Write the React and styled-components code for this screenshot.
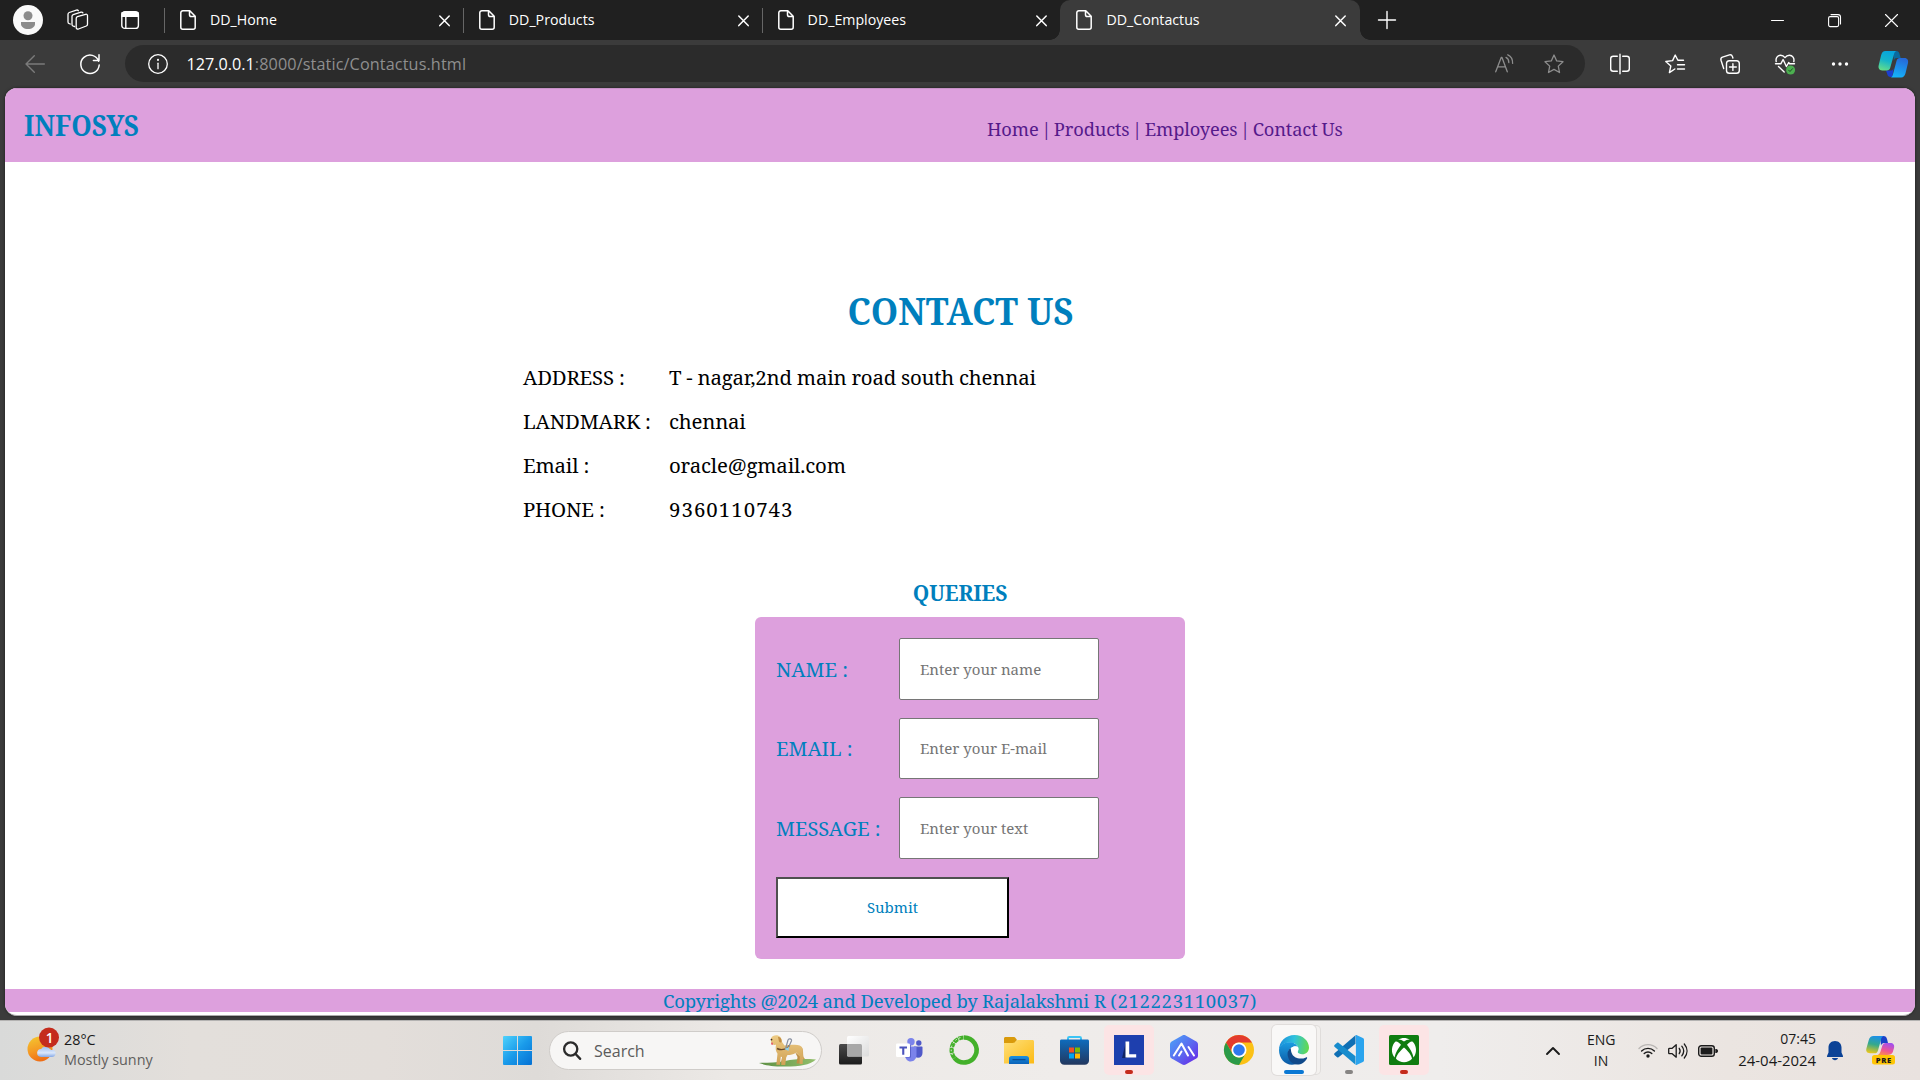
import React from 'react';
import styled, { createGlobalStyle } from 'styled-components';

const Global = createGlobalStyle`
  *, *::before, *::after { box-sizing: border-box; }
  body { margin: 0; background: #3b3b3b; overflow: hidden; }
  svg { display: block; flex: none; overflow: visible; }
`;

const UI = '"Open Sans", "Noto Sans", sans-serif';
const SERIF = '"Noto Serif", "Liberation Serif", serif';
const BLUE = '#007fbd';
const PLUM = '#dda0dd';

const Screen = styled.div`
  width: 1920px;
  height: 1080px;
  display: flex;
  flex-direction: column;
  background: #3b3b3b;
  font-family: ${UI};
`;

/* ---------- browser chrome ---------- */

const TabStrip = styled.div`
  height: 40px;
  flex: none;
  display: flex;
  align-items: center;
  padding-left: 13px;
  background: #202020;
  color: #fff;
`;

const StripTools = styled.div`
  width: 151px;
  display: flex;
  align-items: center;
`;

const Avatar = styled.div`
  width: 30px;
  height: 30px;
  margin-right: 24px;
`;

const StripIcon = styled.div`
  margin-right: ${p => p.$gap || 0}px;
`;

const Tab = styled.div`
  position: relative;
  width: ${p => (p.$active ? 300 : 298.8)}px;
  height: 40px;
  display: flex;
  align-items: center;
  padding: 0 ${p => (p.$active ? 14 : 13)}px 0 16px;
  background: ${p => (p.$active ? '#3b3b3b' : 'transparent')};
  border-radius: ${p => (p.$active ? '10px 10px 0 0' : '0')};

  &::before {
    content: '';
    position: absolute;
    left: ${p => (p.$active ? '-10px' : '0')};
    bottom: ${p => (p.$active ? '0' : '7px')};
    width: ${p => (p.$active ? '10px' : '1px')};
    height: ${p => (p.$active ? '10px' : '25px')};
    background: ${p => (p.$active ? 'radial-gradient(circle at 0 0, transparent 9.5px, #3b3b3b 10px)' : '#666')};
  }
  &::after {
    content: '';
    display: ${p => (p.$active ? 'block' : 'none')};
    position: absolute;
    right: -10px;
    bottom: 0;
    width: 10px;
    height: 10px;
    background: radial-gradient(circle at 100% 0, transparent 9.5px, #3b3b3b 10px);
  }
`;

const TabTitle = styled.span`
  flex: 1;
  margin-left: 14px;
  font-size: 14.2px;
  line-height: 40px;
  height: 40px;
`;

const NewTab = styled.div`
  margin-left: 18px;
  flex: 1;
`;

const WindowButtons = styled.div`
  display: flex;
  align-items: center;
  gap: 44px;
  padding-right: 22.5px;
`;

const Toolbar = styled.div`
  height: 48px;
  flex: none;
  display: flex;
  align-items: flex-start;
  padding-top: 5px;
  color: #fff;
`;

const NavButtons = styled.div`
  width: 125px;
  height: 37px;
  display: flex;
  align-items: center;
  gap: 35px;
  padding-left: 25px;
`;

const AddressBar = styled.div`
  width: 1460px;
  height: 37px;
  border-radius: 19px;
  background: #2b2b2b;
  display: flex;
  align-items: center;
  padding: 0 21px 0 22.5px;
`;

const Url = styled.div`
  flex: 1;
  margin-left: 19px;
  font-size: 16.2px;
  line-height: 38px;
  height: 37px;
  color: #8f8f8f;
`;

const UrlHost = styled.span`
  color: #fff;
`;

const UrlPath = styled.span`
  letter-spacing: 0.12px;
`;

const AddressIcons = styled.div`
  display: flex;
  align-items: center;
  gap: 30px;
  color: #8d8d8d;
`;

const ToolbarActions = styled.div`
  height: 37px;
  display: flex;
  align-items: center;
  gap: 35px;
  padding-left: 24.5px;
`;

const CopilotSlot = styled.div`
  margin: 1px 0 0 -7px;
`;

/* ---------- web page ---------- */

const Page = styled.main`
  margin: 0 5px 4px;
  height: 928px;
  flex: none;
  background: #fff;
  border-radius: 12px;
  border-bottom: 1px solid #aaa;
  box-shadow: 0 0 3px rgba(0, 0, 0, 0.55);
  overflow: hidden;
  display: flex;
  flex-direction: column;
  font-family: ${SERIF};
  color: #000;
`;

const SiteHeader = styled.header`
  height: 74px;
  flex: none;
  display: flex;
  align-items: baseline;
  padding: 19px 0 0 19px;
  background: ${PLUM};
  box-shadow: inset 0 1px 0 #c892c8;
`;

const Brand = styled.div`
  width: 963px;
  font-size: 28px;
  font-weight: 700;
  line-height: 37px;
  color: ${BLUE};
`;

const Narrow = styled.span`
  display: inline-block;
  transform: scaleX(0.93);
  transform-origin: ${p => p.$origin || 'center'};
`;

const SiteNav = styled.nav`
  font-size: 18.3px;
  letter-spacing: -0.14px;
  word-spacing: -2px;
  white-space: pre;
  color: #551a8b;
`;

const NavLink = styled.a`
  word-spacing: -0.5px;
  color: #551a8b;
  text-decoration: none;
`;

const PageTitle = styled.h1`
  margin: 124px 0 0;
  font-size: 37.5px;
  line-height: 50px;
  text-align: center;
  color: ${BLUE};
`;

const Details = styled.dl`
  margin: 19px 0 0 518px;
  display: grid;
  grid-template-columns: 146px auto;
  grid-auto-rows: 44px;
  font-size: 20.4px;
  line-height: 44px;
  letter-spacing: -0.2px;
`;

const Term = styled.dt`
  letter-spacing: -0.2px;
`;

const Value = styled.dd`
  margin: 0;
  letter-spacing: ${p => p.$spacing ?? -0.22}px;
`;

const FormTitle = styled.h2`
  margin: 46px 0 10px;
  font-size: 21px;
  line-height: 32px;
  height: 30px;
  letter-spacing: -0.1px;
  text-align: center;
  color: ${BLUE};
`;

const QueryForm = styled.form`
  width: 430px;
  height: 342px;
  flex: none;
  margin-left: 750px;
  padding: 21px;
  border-radius: 6px;
  background: ${PLUM};
  display: flex;
  flex-direction: column;
  gap: 18px;
`;

const Field = styled.label`
  height: 61.5px;
  display: grid;
  grid-template-columns: 123px 200px;
  align-items: center;
  font-size: 20.2px;
  line-height: 28px;
  letter-spacing: -0.05px;
  color: ${BLUE};
`;

const Input = styled.input`
  width: 200px;
  height: 61.5px;
  padding: 0 20px;
  border: 1px solid #767676;
  border-radius: 2px;
  background: #fff;
  font-family: ${SERIF};
  font-size: 15px;
  outline: none;
  &::placeholder { color: #757575; opacity: 1; }
`;

const Submit = styled.button`
  width: 233px;
  height: 61.5px;
  padding: 0;
  border: 2px solid;
  border-color: #4f4f4f #000 #000 #4f4f4f;
  background: #fff;
  color: ${BLUE};
  font-family: ${SERIF};
  font-size: 15px;
`;

const SiteFooter = styled.footer`
  margin-top: 30px;
  height: 23px;
  flex: none;
  background: ${PLUM};
  color: ${BLUE};
  font-size: 18.5px;
  line-height: 23px;
  letter-spacing: -0.18px;
  text-align: center;
`;

const RollNumber = styled.span`
  letter-spacing: 0.7px;
`;

/* ---------- taskbar ---------- */

const Taskbar = styled.div`
  height: 60px;
  flex: none;
  display: flex;
  border-top: 1px solid #b4b3b2;
  background: linear-gradient(90deg, #d9dad9 0, #e3dfdb 10%, #e3deda 20%, #dedbd8 28%, #ece9e6 38%, #efecea 55%, #efedec 75%, #ebe5e1 90%, #e9e2df 100%);
`;

const Weather = styled.div`
  width: 492px;
  display: flex;
  padding: 5px 0 0 27px;
`;

const WeatherText = styled.div`
  margin-left: 5px;
  padding-top: 3.5px;
  font-size: 14.4px;
  line-height: 20.5px;
  color: #1b1b1b;
`;

const Muted = styled.div`
  color: #5f5e5d;
`;

const Apps = styled.div`
  display: flex;
  gap: 5px;
  padding-top: 4px;
`;

const AppSlot = styled.div`
  position: relative;
  width: 50px;
  height: 50px;
  display: flex;
  align-items: center;
  justify-content: center;
  border-radius: 5px;
  background: ${p => (p.$alert ? '#fce4e5' : p.$active ? '#f9f8f7' : 'transparent')};
  ${p => p.$active && `
    width: 44px; margin: 0 3px;
    box-shadow: 0 0 0 1px #e0dddb, 5px 0 0 -1px #f3f1ef, 5px 0 0 0 #e0dddb;
  `}

  &::after {
    content: '';
    display: ${p => (p.$mark ? 'block' : 'none')};
    position: absolute;
    left: 50%;
    bottom: 1px;
    width: ${p => (p.$active ? 20 : 8)}px;
    height: 4px;
    border-radius: 2px;
    transform: translateX(-50%);
    background: ${p => p.$mark};
  }
`;

const SearchBox = styled.div`
  width: 273px;
  height: 39px;
  margin: 6px 2px 0 2px;
  display: flex;
  align-items: center;
  padding: 0 5px 0 13px;
  border: 1px solid #cfccc9;
  border-radius: 20px;
  background: #f7f6f5;
`;

const SearchLabel = styled.span`
  flex: 1;
  margin-left: 13px;
  font-size: 16px;
  line-height: 38px;
  color: #5b5b5b;
`;

const Tray = styled.div`
  flex: 1;
  display: flex;
  justify-content: flex-end;
  align-items: center;
  padding: 0 24px 0 0;
  font-size: 14px;
  line-height: 20.5px;
  color: #1b1b1b;
`;

const Language = styled.div`
  width: 28px;
  margin: 0 23px 0 27px;
  text-align: center;
`;

const Status = styled.div`
  display: flex;
  align-items: center;
  gap: 10px;
`;

const Clock = styled.div`
  width: 98px;
  margin-bottom: 2px;
  text-align: right;
`;

const DateText = styled.div`
  font-size: 14.9px;
`;

const Bell = styled.div`
  margin: 0 23px 0 11px;
`;

/* ---------- icons ---------- */

const Line = ({ w, h, children, sw = 1.4, color = 'currentColor' }) => (
  <svg width={w} height={h} viewBox={`0 0 ${w} ${h}`} fill="none" stroke={color} strokeWidth={sw} strokeLinecap="round" strokeLinejoin="round">
    {children}
  </svg>
);

const ProfileIcon = () => (
  <svg width="30" height="30" viewBox="0 0 30 30">
    <circle cx="15" cy="15" r="15" fill="#fafafa" />
    <circle cx="15" cy="10.8" r="4.5" fill="#8c8c8c" />
    <path d="M8 17h14v1.700c0 3.200-3 5.300-7 5.300s-7-2.100-7-5.300z" fill="#8c8c8c" />
  </svg>
);

const WorkspacesIcon = () => (
  <Line w={22} h={22} sw={1.3}>
    <path d="M9.2 9.4c0-.8.5-1.4 1.2-1.7l8.2-2.4c1-.3 1.9.3 1.9 1.3v8.6c0 .8-.4 1.4-1.2 1.8l-7.8 3c-1.100.4-2.300-.2-2.300-1.300z" />
    <path d="M7.600 17.500l-1.200-.3c-.9-.3-1.400-.9-1.400-1.800V7.300c0-.8.4-1.400 1.200-1.700L14 3.200c.8-.2 1.500 0 1.900.7" />
    <path d="M3.300 15l-1-.3c-.9-.3-1.300-.9-1.300-1.800V5.200c0-.8.4-1.400 1.200-1.700L9.400 1.100c.8-.2 1.500 0 1.900.6" />
  </Line>
);

const TabMenuIcon = () => (
  <Line w={18} h={18} sw={1.4}>
    <rect x="0.8" y="0.8" width="16.600" height="16.600" rx="3" />
    <path d="M1 1.800h16v3.600H1z" fill="currentColor" />
    <path d="M4.800 6v11" />
  </Line>
);

const FileIcon = () => (
  <Line w={16} h={20} sw={1.5}>
    <path d="M9.800.8H2.800a2 2 0 0 0-2 2v14.400a2 2 0 0 0 2 2h10.400a2 2 0 0 0 2-2V6.200zM9.500 1v3.700a1.800 1.800 0 0 0 1.800 1.800H15" />
  </Line>
);

const CloseTab = () => <Line w={11} h={11} sw={1.5}><path d="M.8 1l9.400 9.600M10.200 1L.8 10.600" /></Line>;
const Plus = () => <Line w={18} h={18} sw={1.4}><path d="M9 .5v17M.5 9h17" /></Line>;
const Minimize = () => <Line w={13} h={13} sw={1}><path d="M.5 6.500h12" /></Line>;
const Restore = () => (
  <Line w={13} h={13} sw={1.1}>
    <rect x=".6" y="2.600" width="10" height="10" rx="1.500" />
    <path d="M3 .6h7a2.500 2.500 0 0 1 2.500 2.500V10" />
  </Line>
);
const CloseWindow = () => <Line w={13} h={13} sw={1.1}><path d="M.5.5l12 12M12.500.5l-12 12" /></Line>;

const BackIcon = () => <Line w={20} h={18} sw={1.4} color="#7b7b7b"><path d="M19.300 9H1M9.300.8L1 9l8.300 8.200" /></Line>;
const ReloadIcon = () => (
  <Line w={20} h={20} sw={1.5}>
    <path d="M18.700 7.200A9.200 9.200 0 1 0 19.200 11M19 .8v5.600h-5.600" />
  </Line>
);
const InfoIcon = () => (
  <Line w={20} h={20} sw={1.300}>
    <circle cx="10" cy="10" r="9.300" />
    <path d="M10 9.200v5.500" />
    <circle cx="10" cy="5.900" r=".4" fill="currentColor" />
  </Line>
);
const ReadAloudIcon = () => (
  <Line w={19} h={20} sw={1.300}>
    <path d="M.7 17.800L6.200 3.500h.8l5.300 14.300M2.600 12.800h7.900M11 3.400c1.900 1 2.900 2.800 2.800 5.200M12.800.8c3.300 1.500 5 4.500 4.800 8.600" />
  </Line>
);
const StarPath = 'M10 1l2.700 5.900 6.300.8-4.700 4.400 1.200 6.400L10 15.400l-5.500 3.100 1.200-6.400L1 7.700l6.300-.8z';
const StarIcon = () => <Line w={20} h={20} sw={1.300}><path d={StarPath} /></Line>;
const SplitIcon = () => (
  <Line w={20} h={20} sw={1.400}>
    <path d="M10 .3v19.400M7.300 2.300H3.200a2.500 2.500 0 0 0-2.500 2.500v9.900a2.500 2.500 0 0 0 2.500 2.500h4.100M12.700 2.300h4.100a2.500 2.500 0 0 1 2.500 2.500v9.900a2.500 2.500 0 0 1-2.500 2.500h-4.100" />
  </Line>
);
const FavoritesIcon = () => (
  <Line w={20} h={20} sw={1.400}>
    <path d="M18.500 6.300h-5.600L10.200 1 7.600 6.600l-6.800.9 5 4.500-1.400 6.600L9.800 15M12.500 10.700h7M12.500 15h7" />
  </Line>
);
const CollectionsIcon = () => (
  <Line w={20} h={20} sw={1.400}>
    <rect x="6.500" y="6.800" width="12.800" height="12.500" rx="2.800" />
    <path d="M12.900 9.700v6.700M9.500 13h6.800M3.700 14.500L1 6.200C.6 4.800 1.100 3.600 2.500 3.100l6.900-2.200c1.400-.4 2.500.2 3 1.500l.5 1.600" />
  </Line>
);
const HealthIcon = () => (
  <Line w={20} h={20} sw={1.400}>
    <path d="M1.200 7.500C.4 4 2.500 1.200 5.600 1.200c1.900 0 3.300.9 4.400 2.400 1.100-1.500 2.500-2.400 4.400-2.400 3.100 0 5.200 2.800 4.400 6.300M.5 9.800h5.300l2.300-4.300 3.300 7 2.300-4 .9 1.300h4.900M3.500 12.500l5.700 5.500" />
    <circle cx="15.600" cy="16" r="4.500" fill="#4caf50" stroke="none" />
    <path d="M13.700 16.200l1.300 1.300 2.500-2.800" stroke="#1f4d22" strokeWidth="1" />
  </Line>
);
const MoreIcon = () => (
  <svg width="20" height="20" viewBox="0 0 20 20" fill="currentColor">
    <circle cx="3.500" cy="10" r="1.700" /><circle cx="10" cy="10" r="1.700" /><circle cx="16.500" cy="10" r="1.700" />
  </svg>
);

const CopilotIcon = () => (
  <svg width="31" height="27" viewBox="0 0 31 27">
    <defs>
      <linearGradient id="cpA" x1=".6" y1="0" x2=".3" y2="1"><stop offset="0" stopColor="#06a4dd" /><stop offset=".5" stopColor="#16b5c9" /><stop offset="1" stopColor="#63dd8b" /></linearGradient>
      <linearGradient id="cpB" x1=".6" y1="0" x2=".3" y2="1"><stop offset="0" stopColor="#2669d8" /><stop offset="1" stopColor="#14b5fb" /></linearGradient>
    </defs>
    <path d="M15 0h3.500c1.600 0 2.400 1 2.900 2.600L22.700 7h-3.500c-2 0-2.800.8-3.300 2.500z" fill="#0a6a9e" />
    <path d="M8 19.500h4.500c1.500 0 2.600-.6 3.200-2.600L14.300 26h-1.700c-2 0-2.800-1-3.300-2.700z" fill="#1b3fd0" />
    <path d="M7.500 0h10.800c-1.300.4-1.900 1.700-2.300 3.200l-3.700 13.300c-.6 2.200-1.700 3-3.600 3H4.200C1.200 19.500 0 17 .7 14.300L3.100 4.200C3.800 1.500 5.100 0 7.500 0z" fill="url(#cpA)" />
    <path d="M23.200 26.500H12.500c1.400-.4 2-1.600 2.400-3.100L18.500 10c.6-2.200 1.700-3 3.600-3h4.300c3.100 0 4.200 2.500 3.600 5.100l-2.500 10.200c-.7 2.700-2 4.200-4.300 4.200z" fill="url(#cpB)" />
  </svg>
);

const WeatherIcon = () => (
  <svg width="32" height="40" viewBox="0 0 32 40">
    <defs>
      <linearGradient id="sun" x1=".3" y1="0" x2=".6" y2="1"><stop offset="0" stopColor="#f3c32f" /><stop offset=".5" stopColor="#f59b24" /><stop offset="1" stopColor="#ee6a14" /></linearGradient>
      <linearGradient id="cloud" x1="0" y1="0" x2="0" y2="1"><stop offset="0" stopColor="#9dbdf0" /><stop offset=".6" stopColor="#dbe8fb" /><stop offset="1" stopColor="#86a9e6" /></linearGradient>
    </defs>
    <circle cx="13" cy="23" r="12.500" fill="url(#sun)" />
    <path d="M14 31a4 4 0 0 1 .3-8c1.200-3 6.800-3.300 8.400 0 .4 0 1.200.5 1.500 1 3.400-.5 5 2 4.300 4-.4 2-1.600 3-3.500 3z" fill="url(#cloud)" />
    <circle cx="22" cy="11.500" r="10" fill="#c42b1c" />
    <text x="22.500" y="16.500" fontSize="13.500" textAnchor="middle" fill="#fff" fontFamily="Open Sans, sans-serif" fontWeight="600">1</text>
  </svg>
);

const StartIcon = () => (
  <svg width="29" height="29" viewBox="0 0 29 29">
    <defs><linearGradient id="win" x1="0" y1="0" x2="1" y2="1"><stop offset="0" stopColor="#4fd2fc" /><stop offset=".5" stopColor="#1a9bea" /><stop offset="1" stopColor="#0570d3" /></linearGradient></defs>
    <path d="M1 0h13v14H0V1a1 1 0 0 1 1-1zM15 0h13a1 1 0 0 1 1 1v13H15zM0 15h14v14H1a1 1 0 0 1-1-1zM15 15h14v13a1 1 0 0 1-1 1H15z" fill="url(#win)" />
  </svg>
);

const SearchIcon = () => (
  <Line w={18} h={19} sw={2.300} color="#2b2b2b"><circle cx="7.700" cy="8" r="6.600" /><path d="M12.600 13l4.600 4.900" /></Line>
);

const DogIcon = () => (
  <svg width="57" height="32" viewBox="0 0 57 32">
    <defs>
      <linearGradient id="hill" x1="0" y1="0" x2="1" y2="0"><stop offset="0" stopColor="#5d8f43" /><stop offset="1" stopColor="#93bf6c" /></linearGradient>
      <linearGradient id="fur" x1="0" y1="0" x2="0" y2="1"><stop offset="0" stopColor="#edcb85" /><stop offset="1" stopColor="#d0a155" /></linearGradient>
    </defs>
    <path d="M0 28c8 2.500 12 3.500 26 3.500C42 31.500 50 30 57 24.500 44 23.500 36 24 26 26c-10 2-18 1.500-26 2z" fill="url(#hill)" />
    <path d="M24 17l-2 11h3.500l2-10zM36 17l2.500 5-1 6.500h3l.8-7z" fill="#bf8f45" />
    <path d="M42.500 12c2.500 3 1 7 2.300 10.500l1.200 1.500-1.500.5c-2.500-2-3-5-2.800-8z" fill="#cf9f52" />
    <path d="M12 3.500C13 .8 16.500-.3 19.500.7c2.500.8 3.200 3.300 3.200 5.800l2.800 4c4-1.200 9-.9 13-.6 3.400.2 5 2 5.200 4.600.2 2.500-.2 4.500.3 6.500l-.3 8h-3.200l.3-7.500-3.600-4c-2.400 2-6 2.600-8.700 2.600l-1.300 2.500-1 7.400h-4l1-8-1.400-.2-.8 8h-3.700l1.200-11c-1.800-2.500-2.200-5.500-1.500-9-2.400.3-4-.2-4.800-1.600z" fill="url(#fur)" />
    <path d="M19 2c2.200 0 4 1.500 3.600 5-1 1-2.100.5-2.600-.5z" fill="#c18f45" />
    <path d="M12.500 7.500l1.500.3-.5 2.200c-1 .4-1.800-1-1-2.500z" fill="#e2506a" />
    <circle cx="12.500" cy="4.600" r=".9" fill="#3b2b20" />
    <path d="M18 13.500c3 1.500 7 1.500 11-1l1-2" fill="none" stroke="#6a4a2c" strokeWidth="1.400" />
    <path d="M26.500 14l2.500-9c.5-2 4.200-1.300 3.500.8L29 13.500" fill="none" stroke="#8890a0" strokeWidth="1.200" />
    <path d="M25.500 14l4.500-2-.5 4z" fill="#8fd3ee" />
  </svg>
);

const TaskViewIcon = () => (
  <svg width="30" height="29" viewBox="0 0 30 29">
    <defs>
      <linearGradient id="tvA" x1="0" y1="0" x2="0" y2="1"><stop offset="0" stopColor="#4a4a4a" /><stop offset="1" stopColor="#1c1c1c" /></linearGradient>
      <linearGradient id="tvB" x1="0" y1="0" x2="1" y2="1"><stop offset="0" stopColor="#fff" /><stop offset="1" stopColor="#dcdcdc" /></linearGradient>
    </defs>
    <rect x="0" y="8" width="23" height="20.500" rx="1.500" fill="url(#tvA)" />
    <rect x="8" y="0" width="22" height="20.500" rx="1.500" fill="url(#tvB)" />
    <path d="M8 8h13.500a1.500 1.500 0 0 1 1.500 1.500v11H9.500A1.500 1.500 0 0 1 8 19z" fill="#a8a8a8" />
  </svg>
);

const TeamsIcon = () => (
  <svg width="27" height="24" viewBox="0 0 27 24">
    <circle cx="22.800" cy="5" r="2.700" fill="#5059c9" />
    <path d="M18 8.500h7.500c.6 0 1 .4 1 1V15c0 3-2 4.700-4.500 4.700-2 0-3.500-1-4-2.500z" fill="#5059c9" />
    <circle cx="15" cy="3.700" r="3.700" fill="#7b83eb" />
    <path d="M9.500 8.500h10c.6 0 1 .4 1 1v7.300c0 4-2.500 6.700-5.800 6.700S9.200 21 9 17z" fill="#7b83eb" />
    <path d="M10 7h5v12.500h-5.500z" fill="#4b53bc" opacity=".7" />
    <rect x="0" y="5.500" width="14" height="13.500" rx="1.300" fill="#fff" />
    <path d="M3.500 8.500h7.500v2H8.300v6.300H6.200v-6.300H3.500z" fill="#4b53bc" />
  </svg>
);

const AnacondaIcon = () => (
  <svg width="30" height="30" viewBox="0 0 30 30" fill="none" stroke="#43b02a">
    <path d="M15 2.500a12.500 12.500 0 1 1-9.500 20.500" strokeWidth="4.600" />
    <path d="M5.500 23A12.500 12.500 0 0 1 15 2.500" strokeWidth="4.200" strokeDasharray="5 .6" />
    <path d="M3.400 20A12.500 12.500 0 0 1 12 2.500" stroke="#f0edeb" strokeWidth="1" strokeDasharray="1.500 2.500" />
    <path d="M5.400 18A10 10 0 0 1 13 4.500" stroke="#f0edeb" strokeWidth=".8" strokeDasharray="1.500 3" />
  </svg>
);

const ExplorerIcon = () => (
  <svg width="30" height="27" viewBox="0 0 30 27">
    <defs>
      <linearGradient id="fold" x1="0" y1="0" x2="1" y2="1"><stop offset="0" stopColor="#ffe07a" /><stop offset="1" stopColor="#fcba14" /></linearGradient>
      <linearGradient id="dock" x1="0" y1="0" x2="0" y2="1"><stop offset="0" stopColor="#1b91e0" /><stop offset="1" stopColor="#0b62b8" /></linearGradient>
    </defs>
    <path d="M0 1.500C0 .6.600 0 1.500 0h8c1 0 1.500.3 2 1l1.500 2-3 4H0z" fill="#d99a0b" />
    <path d="M0 6h9c1 0 1.500-.3 2-.9l1.300-1.400c.5-.5 1-.7 1.700-.7h14.500c.9 0 1.500.6 1.500 1.500V26.500H0z" fill="url(#fold)" />
    <path d="M5 27v-5.500c0-1.500 1-2.500 2.500-2.500h15c1.500 0 2.500 1 2.500 2.500V27z" fill="url(#dock)" />
    <rect x="8.500" y="22" width="13" height="1.300" fill="#0b4d94" />
  </svg>
);

const StoreIcon = () => (
  <svg width="29" height="30" viewBox="0 0 29 30">
    <defs><linearGradient id="bag" x1="0" y1="0" x2="0" y2="1"><stop offset="0" stopColor="#0f6cbd" /><stop offset="1" stopColor="#22375e" /></linearGradient></defs>
    <path d="M8 6.500V3.300c0-.8.500-1.300 1.300-1.300h10.400c.8 0 1.300.5 1.300 1.300v3.200" fill="none" stroke="#3cc4f5" strokeWidth="2" />
    <path d="M0 6c0-1 .6-1.500 1.500-1.500h26c.9 0 1.500.6 1.500 1.500v19.500c0 2.500-1.800 4.300-4.300 4.300H4.300C1.800 29.800 0 28 0 25.500z" fill="url(#bag)" />
    <rect x="9" y="12.500" width="5" height="5" fill="#f25022" /><rect x="15" y="12.500" width="5" height="5" fill="#7fba00" />
    <rect x="9" y="18.500" width="5" height="5" fill="#00a4ef" /><rect x="15" y="18.500" width="5" height="5" fill="#ffb900" />
  </svg>
);

const LenovoIcon = () => (
  <svg width="30" height="30" viewBox="0 0 30 30">
    <rect width="30" height="30" fill="#1e3fae" />
    <path d="M12 6.500L8 23h5z" fill="#102463" />
    <path d="M11.500 6.500h3.700v12.700h7v3.300H11.500z" fill="#fff" />
  </svg>
);

const HexIcon = () => (
  <svg width="28" height="30" viewBox="0 0 28 30">
    <defs><linearGradient id="hex" x1="0" y1="0" x2="1" y2="1"><stop offset="0" stopColor="#4aa5f7" /><stop offset=".5" stopColor="#5a6cf0" /><stop offset="1" stopColor="#6a1fe6" /></linearGradient></defs>
    <path d="M12.300.4c1-.5 2.400-.5 3.400 0l10.600 6c1 .6 1.700 1.700 1.700 2.900v11.400c0 1.200-.7 2.300-1.700 2.900l-10.600 6c-1 .5-2.400.5-3.400 0l-10.600-6A3.400 3.400 0 0 1 0 20.700V9.300c0-1.200.7-2.300 1.700-2.900z" fill="url(#hex)" />
    <path d="M3.800 20.500L11.500 8.500 18 20.500M9 20.500l2.500-4M18.500 12l5.500 8.500" fill="none" stroke="#fff" strokeWidth="2" strokeLinecap="round" strokeLinejoin="round" />
  </svg>
);

const ChromeIcon = () => (
  <svg width="30" height="30" viewBox="0 0 30 30">
    <circle cx="15" cy="15" r="15" fill="#fbc116" />
    <path d="M2 7.500A15 15 0 0 1 28 7.500H15A7.500 7.500 0 0 0 8.500 18.800z" fill="#e33b2e" />
    <path d="M2 7.500A15 15 0 0 0 15 30l6.500-11.300A7.500 7.500 0 0 1 8.500 18.800z" fill="#2a9a48" />
    <circle cx="15" cy="15" r="7.500" fill="#fff" />
    <circle cx="15" cy="15" r="5.800" fill="#2f78ee" />
  </svg>
);

const EdgeIcon = () => (
  <svg width="30" height="30" viewBox="0 0 30 30">
    <defs>
      <linearGradient id="edA" x1="0" y1=".3" x2="1" y2=".4"><stop offset="0" stopColor="#1c8ddb" /><stop offset=".5" stopColor="#2fc2dd" /><stop offset="1" stopColor="#63d94f" /></linearGradient>
      <linearGradient id="edB" x1="0" y1="0" x2="0" y2="1"><stop offset="0" stopColor="#1b9de2" /><stop offset="1" stopColor="#0c59a4" /></linearGradient>
    </defs>
    <path d="M0 15C0 6.500 6.800 0 15.500 0S30 6.300 30 12.500c0 4.200-3 6.800-6.800 6.800-3.500 0-5-1.500-4.700-2.600.3-.8.900-1.300.9-2.900 0-3.300-3.600-6.300-8.400-6.300C5 7.500 1 11 0 15z" fill="url(#edA)" />
    <path d="M0 15C.5 10.500 5 7.300 10.500 7.300c4 0 7.300 2 8.400 5-4-2-9.400.5-9.700 5.700-.2 5 3 9.500 8 11C8 32 0 25 0 15z" fill="url(#edB)" />
    <path d="M11.500 13c-2 1.500-3.300 4-2.900 7 .5 5 4.500 9.500 9.400 9.600 4 .2 8-2.600 10-6.200.5-1-.2-1.500-1-1-5.500 2.700-12.500.8-14.400-4.400-.6-1.700-.5-3.500-1.100-5z" fill="#114a8b" />
    <path d="M19.200 12.600c.5 1.700.2 3-.5 4-.6 1.100.6 2.500 4 2.700-4 .8-10-.5-10.500-4.300-.2-1.800 1-3 2.800-3.500 1.800-.4 3.500.1 4.200 1.100z" fill="#fff" />
  </svg>
);

const CodeIcon = () => (
  <svg width="30" height="30" viewBox="0 0 30 30">
    <path d="M21.500.3v8.500L4.500 22.300c-.5.400-1 .3-1.400 0L.500 20c-.5-.5-.5-1.200 0-1.700z" fill="#0f6fb4" />
    <path d="M.5 11.700c-.5-.5-.5-1.200 0-1.700l2.600-2.300c.4-.3 1-.3 1.400 0l17 13.500v8.500z" fill="#178ccd" />
    <path d="M21.300.4c.3-.4 1-.5 1.600-.2l6 2.800c.7.3 1.100 1 1.100 1.700v20.600c0 .7-.4 1.400-1.100 1.700l-6 2.800c-.6.3-1.300.2-1.700-.3.300.2.700 0 .7-.5V1c0-.5-.3-.8-.6-.6z" fill="#2aa4ee" />
  </svg>
);

const XboxIcon = () => (
  <svg width="30" height="30" viewBox="0 0 30 30">
    <rect width="30" height="30" rx="1.500" fill="#107c10" />
    <path d="M9 4.600C11 3.500 13 3 15 3s4 .5 6 1.600c-2-.3-4 .6-6 1.900-2-1.300-4-2.200-6-1.900z" fill="#fff" />
    <path d="M6.300 6.700C3 10 2 15.500 4 20c.4.900.9 1.800 1.500 2.500C6.500 18 9 13.500 12 9.800 10 7.500 8 6 6.300 6.700zM23.700 6.700C27 10 28 15.500 26 20c-.4.900-.9 1.800-1.500 2.500C23.500 18 21 13.500 18 9.800c2-2.300 4-3.800 5.700-3.100z" fill="#fff" />
    <path d="M15 12.500c4 3.500 7.500 7.700 8 11.200-2 2.200-5 3.500-8 3.500s-6-1.300-8-3.500c.5-3.500 4-7.700 8-11.200z" fill="#fff" />
  </svg>
);

const ChevronUp = () => <Line w={14} h={8} sw={1.900}><path d="M1 7l6-6 6 6" /></Line>;
const WifiIcon = () => (
  <svg width="20" height="15" viewBox="0 0 20 15" fill="none" stroke="#1b1b1b" strokeWidth="1.400" strokeLinecap="round">
    <path d="M1 5.500a12.500 12.500 0 0 1 18 0" stroke="#b9b6b4" />
    <path d="M3.600 8a9 9 0 0 1 12.800 0M6.200 10.500a5.400 5.400 0 0 1 7.600 0" />
    <circle cx="10" cy="13" r="1.700" fill="#1b1b1b" stroke="none" />
  </svg>
);
const VolumeIcon = () => (
  <Line w={20} h={16} sw={1.300}>
    <path d="M1.500 5.300h2.700L8.200 1.800v12.400L4.200 10.700H1.500c-.5 0-.8-.3-.8-.8V6.100c0-.5.300-.8.8-.8zM11.200 5.300c1.200 1.700 1.200 3.700 0 5.400M13.800 3.200c2.400 3 2.400 6.600 0 9.600M16.300 1c3.600 4.300 3.600 9.700 0 14" />
  </Line>
);
const BatteryIcon = () => (
  <svg width="20" height="12" viewBox="0 0 20 12">
    <rect x=".7" y=".7" width="15.600" height="10.600" rx="2.600" fill="none" stroke="#1b1b1b" strokeWidth="1.400" />
    <rect x="2.600" y="2.600" width="11.800" height="6.800" rx="1" fill="#1b1b1b" />
    <path d="M17.300 4c1.700 0 2.700.6 2.700 2s-1 2-2.700 2z" fill="#1b1b1b" />
  </svg>
);
const BellIcon = () => (
  <svg width="16" height="20" viewBox="0 0 16 20" fill="#0b4296">
    <path d="M8 0c4 0 6.500 2.900 6.500 6.500v5L16 15c.2.500-.1 1-.6 1H.600C.1 16-.2 15.500 0 15l1.500-3.500v-5C1.500 2.900 4 0 8 0zM5 17h6c-.3 1.400-1.500 2.200-3 2.200S5.300 18.400 5 17z" />
  </svg>
);
const CopilotPreIcon = () => (
  <svg width="30" height="29" viewBox="0 0 30 29">
    <defs>
      <linearGradient id="cqA" x1=".6" y1="0" x2=".4" y2="1"><stop offset="0" stopColor="#1b8fea" /><stop offset=".5" stopColor="#35a98c" /><stop offset="1" stopColor="#e5c61e" /></linearGradient>
      <linearGradient id="cqB" x1=".7" y1="0" x2=".3" y2="1"><stop offset="0" stopColor="#a04ff0" /><stop offset=".6" stopColor="#ee5596" /><stop offset="1" stopColor="#fb8a52" /></linearGradient>
    </defs>
    <path d="M14 0h3.500c2 0 3 1 3.500 3l1 4h-4c-1.500 0-2.500 1-3 2.500z" fill="#1b41c9" />
    <path d="M7.500 0h10c-1.300.4-2 1.700-2.400 3.200L12 14.500c-.6 2-1.700 2.800-3.600 2.800H4C1 17.300-.3 15.300.4 12.600L2.800 4C3.500 1.500 5.100 0 7.500 0z" fill="url(#cqA)" />
    <path d="M21 19H11.500c1.500-.5 2.500-2 3-3.500l1.700-5.500c.6-2 1.700-3 3.600-3h4.500c3 0 4.500 2 3.700 5l-1.200 4c-.7 2-2.500 3-5.800 3z" fill="url(#cqB)" />
    <rect x="6" y="19" width="23" height="9.500" rx="2.500" fill="#ffc505" />
    <text x="17.800" y="26.500" fontSize="7.600" fontWeight="800" letterSpacing=".7" textAnchor="middle" fill="#1b1b1b" fontFamily="Open Sans, sans-serif">PRE</text>
  </svg>
);

/* ---------- data ---------- */

const tabs = ['DD_Home', 'DD_Products', 'DD_Employees', 'DD_Contactus'];
const links = ['Home', 'Products', 'Employees', 'Contact Us'];
const details = [
  { term: 'ADDRESS :', value: 'T - nagar,2nd main road south chennai' },
  { term: 'LANDMARK :', value: 'chennai' },
  { term: 'Email :', value: 'oracle@gmail.com', spacing: -0.15 },
  { term: 'PHONE :', value: '9360110743', spacing: 1.05 },
];
const fields = [
  { label: 'NAME :', hint: 'Enter your name' },
  { label: 'EMAIL :', hint: 'Enter your E-mail' },
  { label: 'MESSAGE :', hint: 'Enter your text' },
];
const pinned = [
  { Icon: TaskViewIcon },
  { Icon: TeamsIcon },
  { Icon: AnacondaIcon },
  { Icon: ExplorerIcon },
  { Icon: StoreIcon },
  { Icon: LenovoIcon, alert: true, mark: '#c42b1c' },
  { Icon: HexIcon },
  { Icon: ChromeIcon },
  { Icon: EdgeIcon, active: true, mark: '#0a78d4' },
  { Icon: CodeIcon, mark: '#868483' },
  { Icon: XboxIcon, alert: true, mark: '#c42b1c' },
];

export default function App() {
  return (
    <Screen>
      <Global />
      <TabStrip>
        <StripTools>
          <Avatar><ProfileIcon /></Avatar>
          <StripIcon $gap={32}><WorkspacesIcon /></StripIcon>
          <StripIcon><TabMenuIcon /></StripIcon>
        </StripTools>
        {tabs.map((title, i) => (
          <Tab key={title} $active={i === 3}>
            <FileIcon />
            <TabTitle>{title}</TabTitle>
            <CloseTab />
          </Tab>
        ))}
        <NewTab><Plus /></NewTab>
        <WindowButtons><Minimize /><Restore /><CloseWindow /></WindowButtons>
      </TabStrip>

      <Toolbar>
        <NavButtons><BackIcon /><ReloadIcon /></NavButtons>
        <AddressBar>
          <InfoIcon />
          <Url><UrlHost>127.0.0.1</UrlHost><UrlPath>:8000/static/Contactus.html</UrlPath></Url>
          <AddressIcons><ReadAloudIcon /><StarIcon /></AddressIcons>
        </AddressBar>
        <ToolbarActions>
          <SplitIcon /><FavoritesIcon /><CollectionsIcon /><HealthIcon /><MoreIcon />
          <CopilotSlot><CopilotIcon /></CopilotSlot>
        </ToolbarActions>
      </Toolbar>

      <Page>
        <SiteHeader>
          <Brand><Narrow $origin="left">INFOSYS</Narrow></Brand>
          <SiteNav>
            {links.map((link, i) => (
              <React.Fragment key={link}>{i > 0 && ' | '}<NavLink>{link}</NavLink></React.Fragment>
            ))}
          </SiteNav>
        </SiteHeader>
        <PageTitle><Narrow>CONTACT US</Narrow></PageTitle>
        <Details>
          {details.map(d => (
            <React.Fragment key={d.term}>
              <Term>{d.term}</Term>
              <Value $spacing={d.spacing}>{d.value}</Value>
            </React.Fragment>
          ))}
        </Details>
        <FormTitle>QUERIES</FormTitle>
        <QueryForm>
          {fields.map(f => (
            <Field key={f.label}>{f.label}<Input placeholder={f.hint} /></Field>
          ))}
          <Submit type="button">Submit</Submit>
        </QueryForm>
        <SiteFooter>
          Copyrights @2024 and Developed by Rajalakshmi R <RollNumber>(212223110037)</RollNumber>
        </SiteFooter>
      </Page>

      <Taskbar>
        <Weather>
          <WeatherIcon />
          <WeatherText>28°C<Muted>Mostly sunny</Muted></WeatherText>
        </Weather>
        <Apps>
          <AppSlot><StartIcon /></AppSlot>
          <SearchBox><SearchIcon /><SearchLabel>Search</SearchLabel><DogIcon /></SearchBox>
          {pinned.map(({ Icon, alert, active, mark }, i) => (
            <AppSlot key={i} $alert={alert} $active={active} $mark={mark}><Icon /></AppSlot>
          ))}
        </Apps>
        <Tray>
          <ChevronUp />
          <Language>ENG<br />IN</Language>
          <Status><WifiIcon /><VolumeIcon /><BatteryIcon /></Status>
          <Clock>07:45<DateText>24-04-2024</DateText></Clock>
          <Bell><BellIcon /></Bell>
          <CopilotPreIcon />
        </Tray>
      </Taskbar>
    </Screen>
  );
}
